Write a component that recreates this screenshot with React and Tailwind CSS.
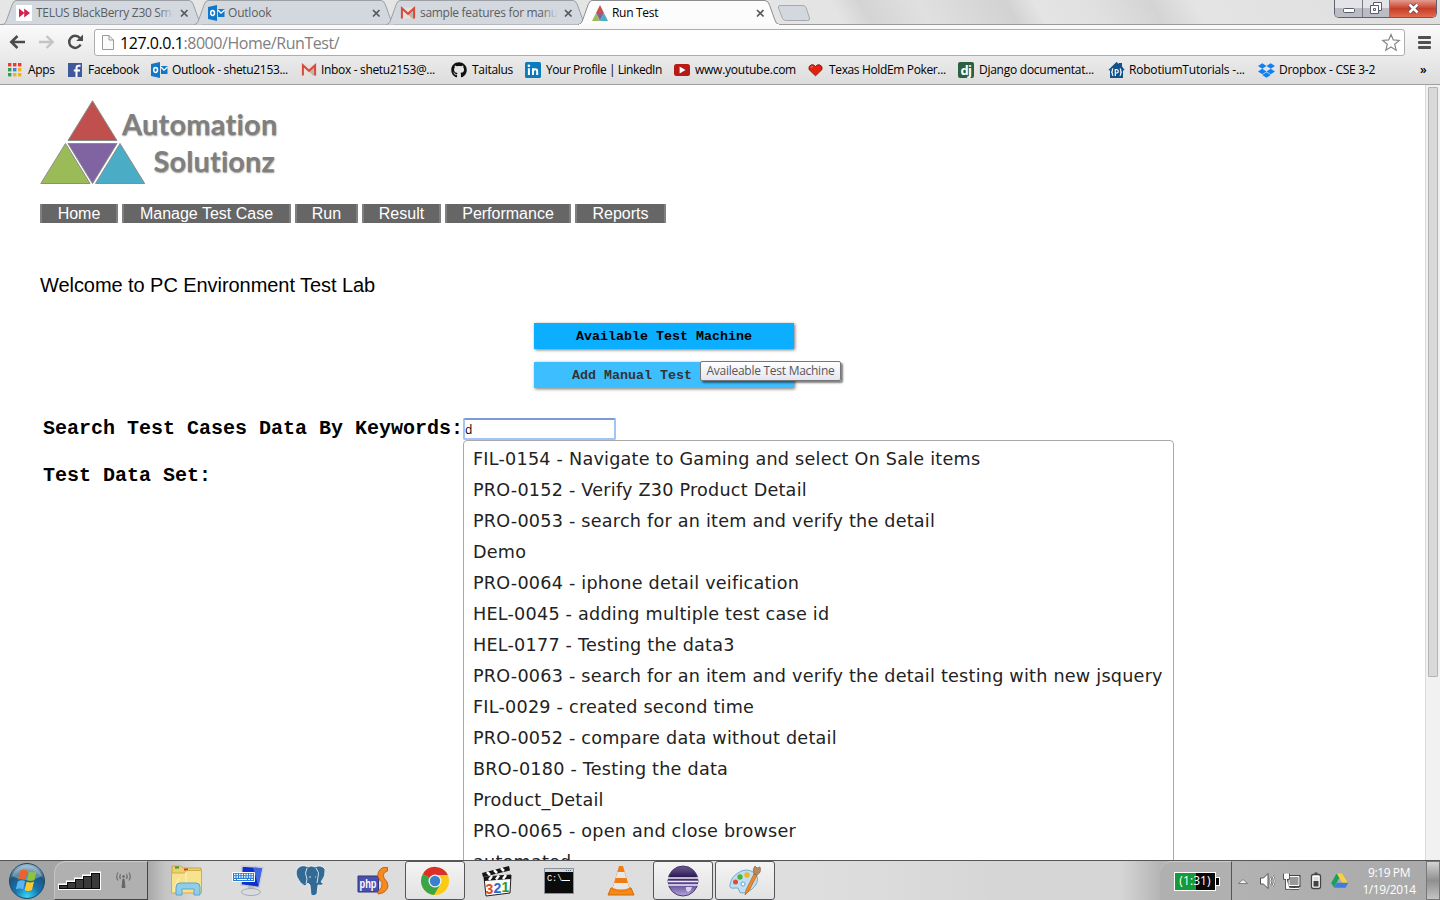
import React from "react";
import { FaGithub, FaDropbox } from "react-icons/fa";

const UI = "font-['Open_Sans','Noto_Sans',sans-serif]";

/* ---------- small icons ---------- */
const Outlook = () => (
  <svg width="17" height="16" viewBox="0 0 17 16" className="shrink-0">
    <path d="M0 2 9 0v16L0 14z" fill="#1277c9" />
    <path d="M10 4h6.5v8H10z" fill="#1277c9" />
    <path d="M10 5l3 3.2L16.5 5" stroke="#fff" strokeWidth="1.3" fill="none" />
    <ellipse cx="4.6" cy="8" rx="1.9" ry="2.4" fill="none" stroke="#fff" strokeWidth="1.5" />
  </svg>
);
const Gmail = () => (
  <svg width="16" height="16" viewBox="0 0 16 16" className="shrink-0">
    <path d="M1 2.5h14v11H1z" fill="#e6e1da" />
    <path d="M15 13.5V4L8 9.5l4 4z" fill="#bdb6ae" />
    <path d="M1.9 13.5V3.2L8 8.8l6.1-5.6v10.3" stroke="#d9493c" strokeWidth="2" fill="none" />
  </svg>
);
const Telus = () => (
  <svg width="16" height="16" viewBox="0 0 16 16" className="shrink-0">
    <path d="M0 0h16v16H0z" fill="#fff" />
    <path d="M3 3.5 8.5 8 3 12.5zM8.2 3.5 14 8l-5.800 4.500z" fill="#d3214f" />
  </svg>
);
const Pyramid = () => (
  <svg width="16" height="16" viewBox="0 0 16 16" className="shrink-0">
    <path d="M8 0l4 8H4z" fill="#c8504d" />
    <path d="M4 8h8l-4 8z" fill="#8064a2" />
    <path d="M4 8l4 8H0z" fill="#9bbb59" />
    <path d="M12 8l4 8H8z" fill="#4bacc6" />
  </svg>
);
const AppsIcon = () => (
  <svg width="14" height="14" viewBox="0 0 14 14" className="shrink-0">
    {["#ee3b31", "#ee3b31", "#ee3b31", "#2f9e55", "#3b82f0", "#f2b21b", "#2f9e55", "#f2b21b", "#f2b21b"].map((c, i) => (
      <rect key={i} x={(i % 3) * 5} y={Math.floor(i / 3) * 5} width="3.4" height="3.4" fill={c} />
    ))}
  </svg>
);
const Facebook = () => (
  <svg width="14" height="14" viewBox="0 0 14 14" className="shrink-0">
    <path d="M0 0h14v14H0z" fill="#3f5a9b" />
    <path d="M8.500 14V5q0-2.300 2.300-2.300h1.700M5.800 7.600h6.200" stroke="#fff" strokeWidth="2" fill="none" />
  </svg>
);
const LinkedIn = () => (
  <svg width="16" height="16" viewBox="0 0 16 16" className="shrink-0">
    <rect width="16" height="16" rx="1.500" fill="#0a7bbd" />
    <path d="M3.900 6.300V13M8 13V6.300M8 9.500q0-2.300 2.200-2.300 2 0 2 2.300V13" stroke="#fff" strokeWidth="2" fill="none" />
    <circle cx="3.900" cy="3.800" r="1.300" fill="#fff" />
  </svg>
);
const YouTube = () => (
  <svg width="16" height="12" viewBox="0 0 16 12" className="shrink-0">
    <rect width="16" height="12" rx="2.5" fill="#b81a16" />
    <path d="M5.6 2.6 11.5 6 5.6 9.4z" fill="#fff" />
  </svg>
);
const Heart = () => (
  <svg width="15" height="14" viewBox="0 0 15 14" className="shrink-0">
    <path d="M7.5 12.8 1 6.5Q.2 3 3.4 1.8 6 1.2 7.5 3.6 9 1.2 11.6 1.8 14.8 3 14 6.5z" fill="#e6200f" stroke="#7e1408" strokeWidth=".9" />
    <path d="M3 4.6q.5-1.2 1.7-1" stroke="#ff9c80" strokeWidth="1" fill="none" />
  </svg>
);
const Django = () => (
  <span className="flex h-4 w-4 shrink-0 items-center justify-center rounded-[2px] bg-[#2b6141] font-['Open_Sans',sans-serif] text-[13px] leading-[14px] font-bold tracking-[-0.5px] text-white">dj</span>
);
const Robotium = () => (
  <svg width="17" height="16" viewBox="0 0 17 16" className="shrink-0">
    <path d="M8.500 0 11 2V1h3v3.500L16.700 8 15 8.600V16H2V8.600L.3 8z" fill="#12518a" />
    <path d="M5.200 6.500Q4 6.800 4.300 9q0 1-1 1.200 1 .2 1 1.200-.2 2 1 2.300M11.800 6.500q1.200.3.9 2.500 0 1 1 1.200-1 .2-1 1.200.2 2-1 2.300M7.300 14V7.600h1.400q1.600.1 1.600 1.700t-1.600 1.700H7.500" stroke="#fff" strokeWidth="1.2" fill="none" />
  </svg>
);

/* ---------- browser chrome ---------- */
const TabShape = ({ active }) => (
  <svg width="205" height="25" viewBox="0 0 205 25" className="absolute top-0 left-0 -z-10">
    <path
      d="M0 24.500C3 24.500 4 22 5 19L10 5Q11.500 .5 14 .5H187Q190 .5 191.500 5L196.500 19Q198 24.500 201 24.500"
      fill={active ? "#fcfcfc" : "#d3d8df"}
      stroke={active ? "#8e8e8e" : "#9c9fa4"}
    />
    {active && <path d="M1 24.500h200" stroke="#fafafa" />}
  </svg>
);
const TABS = [
  { icon: <Telus />, title: "TELUS BlackBerry Z30 Sma", track: "tracking-[-0.3px]" },
  { icon: <Outlook />, title: "Outlook", track: "tracking-[-0.2px]" },
  { icon: <Gmail />, title: "sample features for manua", track: "tracking-[-0.3px]" },
  { icon: <Pyramid />, title: "Run Test", active: true, track: "tracking-[-0.3px]" },
];
const Tab = ({ icon, title, active, track }) => (
  <div className={`relative isolate flex h-[25px] w-[192px] shrink-0 items-center pl-[14px] ${active ? "z-10" : ""}`}>
    <TabShape active={active} />
    <div className="flex w-5 shrink-0 pt-[1px]">{icon}</div>
    <div className={`relative w-[138px] overflow-hidden text-[12px] leading-4 whitespace-nowrap ${track} ${active ? "text-black" : "text-[#5b5d61]"}`}>
      {title}
      {!active && <span className="absolute top-0 right-0 h-4 w-4 bg-gradient-to-r from-transparent to-[#d3d8df]" />}
    </div>
    <svg width="9" height="9" viewBox="0 0 9 9" className="mt-[1px] ml-[6px] shrink-0">
      <path d="M1 1l6.500 6.500M7.500 1 1 7.500" stroke="#55575a" strokeWidth="1.700" />
    </svg>
  </div>
);

const BOOKMARKS = [
  { w: "w-[60px]", g: "w-5", icon: <AppsIcon />, label: "Apps", t: "tracking-[-0.3px]" },
  { w: "w-[83px]", g: "w-5", icon: <Facebook />, label: "Facebook", t: "tracking-[-0.3px]" },
  { w: "w-[150px]", g: "w-[21px]", icon: <Outlook />, label: "Outlook - shetu2153...", t: "tracking-[-0.33px]" },
  { w: "w-[150px]", g: "w-5", icon: <Gmail />, label: "Inbox - shetu2153@...", t: "tracking-[-0.33px]" },
  { w: "w-[74px]", g: "w-[21px]", icon: <FaGithub size={16} color="#111" />, label: "Taitalus", t: "tracking-[-0.3px]" },
  { w: "w-[149px]", g: "w-[21px]", icon: <LinkedIn />, label: "Your Profile | LinkedIn", t: "tracking-[-0.44px]" },
  { w: "w-[134px]", g: "w-[21px]", icon: <YouTube />, label: "www.youtube.com", t: "tracking-[-0.24px]" },
  { w: "w-[150px]", g: "w-[21px]", icon: <Heart />, label: "Texas HoldEm Poker...", t: "tracking-[-0.36px]" },
  { w: "w-[150px]", g: "w-[21px]", icon: <Django />, label: "Django documentat...", t: "tracking-[-0.26px]" },
  { w: "w-[150px]", g: "w-[21px]", icon: <Robotium />, label: "RobotiumTutorials -...", t: "tracking-[-0.2px]" },
  { w: "w-[162px]", g: "w-[21px]", icon: <FaDropbox size={17} color="#1081ee" />, label: "Dropbox - CSE 3-2", t: "tracking-[-0.27px]" },
];

const WindowButtons = () => (
  <div className="mr-[3px] flex h-[18px] w-[103px] overflow-hidden rounded-b-[5px] border border-t-0 border-[#5d616c]">
    <div className="flex w-[28px] items-center justify-center border-r border-[#777b86] bg-gradient-to-b from-[#e4e4e8] from-45% to-[#bcbcc4] to-50%">
      <svg width="12" height="5" className="mt-[3px]"><rect x=".5" y=".5" width="11" height="4" rx="1" fill="#fff" stroke="#5b5c6c" /></svg>
    </div>
    <div className="flex w-[27px] items-center justify-center border-r border-[#777b86] bg-gradient-to-b from-[#e4e4e8] from-45% to-[#bcbcc4] to-50%">
      <svg width="12" height="12" fill="#fff" stroke="#5b5c6c" className="-mt-[2px]"><path d="M3.500 .5h8v8h-8z" /><path d="M.5 3.500h8v8h-8z" /><path d="M3.500 6.500h2v2h-2z" /></svg>
    </div>
    <div className="flex flex-1 items-center justify-center bg-gradient-to-b from-[#e39a8e] from-0% via-[#c63e28] via-50% to-[#e2694e]">
      <svg width="13" height="11" viewBox="0 0 13 11" className="mb-[1px]">
        <path d="M2.500 1.500l8 8M10.500 1.500l-8 8" stroke="#5b4050" strokeWidth="4.200" />
        <path d="M2.500 1.500l8 8M10.500 1.500l-8 8" stroke="#fff" strokeWidth="2.600" />
      </svg>
    </div>
  </div>
);

const Chrome = () => (
  <header className={`h-[85px] shrink-0 ${UI}`}>
    <div className="flex h-[25px] justify-between border-b border-[#9a9a9a] bg-[linear-gradient(60deg,#e6e6e6_0%,#e4e4e4_58%,#d4d4d4_60%,#e0e0e0_64%,#d2d2d2_70%,#e4e4e4_72%,#e0e0e0_76%,#d4d4d4_80%,#e4e4e4_83%,#dedede_100%)]">
      <div className="flex h-[25px] pl-[2px]">
        {TABS.map((t) => <Tab key={t.title} {...t} />)}
        <svg width="34" height="16" viewBox="0 0 34 16" className="mt-[5px] ml-[7px]">
          <path d="M3 .5h23q2 0 3 2l3.500 10.500q.5 2.500-2 2.500H8.500q-2 0-3-2L1.500 3Q1 .5 3 .5z" fill="#d3d8df" stroke="#a6a8ac" />
        </svg>
      </div>
      <WindowButtons />
    </div>
    <div className="flex h-[60px] flex-col border-b border-[#a0a0a0] bg-gradient-to-b from-[#fafafa] to-[#dddddd]">
      <div className="flex h-[31px] items-end pl-[9px]">
        <svg width="76" height="18" viewBox="0 0 76 18" fill="none" className="mr-[9px] mb-[5px]">
          <path d="M16 9H3M8.500 3 2.300 9l6.200 6" stroke="#4c4c4c" strokeWidth="2.600" />
          <path d="M30 9h13M37.500 3l6.200 6-6.200 6" stroke="#c4c4c4" strokeWidth="2.400" />
          <path d="M71.600 11.500A6 6 0 1 1 70.800 5" stroke="#4c4c4c" strokeWidth="2.500" />
          <path d="M74 1.500V8h-6.800z" fill="#4c4c4c" />
        </svg>
        <div className="flex h-[27px] w-[1311px] items-center rounded-[3px] border border-[#adadad] bg-white pl-[7px]">
          <svg width="12" height="15" viewBox="0 0 12 15" className="mr-[6px]">
            <path d="M.5 .5H7l4.500 4.500v9.500H.5z" fill="#fafafa" stroke="#999" />
            <path d="M7 .5V5h4.500" fill="none" stroke="#999" />
          </svg>
          <div className="flex-1 text-[16px] leading-5 tracking-[-0.45px] text-[#808080]"><span className="text-black">127.0.0.1</span>:8000/Home/RunTest/</div>
          <svg width="20" height="19" viewBox="0 0 20 19" className="mr-[3px]">
            <path d="M10 1.500l2.300 5.400 6 .5-4.600 3.900 1.500 5.900L10 14l-5.200 3.200 1.500-5.900L1.700 7.400l6-.5z" fill="#fff" stroke="#868686" strokeWidth="1.200" />
          </svg>
        </div>
        <svg width="13" height="13" className="mb-[7px] ml-[13px]" fill="#505050">
          <rect width="13" height="3" rx="1" /><rect y="5" width="13" height="3" rx="1" /><rect y="10" width="13" height="3" rx="1" />
        </svg>
      </div>
      <div className="flex h-[28px] items-center pl-2 text-[12px] text-black">
        {BOOKMARKS.map((b) => (
          <div key={b.label} className={`flex shrink-0 items-center whitespace-nowrap ${b.w}`}>
            <span className={`flex shrink-0 ${b.g}`}>{b.icon}</span>
            <span className={b.t}>{b.label}</span>
          </div>
        ))}
        <span className="text-[12px] font-semibold">»</span>
      </div>
    </div>
  </header>
);

/* ---------- page ---------- */
const Logo = () => (
  <div className="flex h-[86px]">
    <svg width="106" height="86" viewBox="0 0 106 86" stroke="#8c8c8c" strokeWidth="1">
      <path d="M52.500 .8 77 40.500H28z" fill="#c0504d" />
      <path d="M28 43.500h49L52.500 83.500z" fill="#8064a2" />
      <path d="M25.500 43.500 50 83.500H.8z" fill="#9bbb59" />
      <path d="M80 43.500 104.700 83.500H55.500z" fill="#4bacc6" />
    </svg>
    <div className="-ml-[24px] w-[153px] pt-[5px] text-right font-['Lato',sans-serif] text-[29px] leading-[37px] font-bold text-[#7f7f7f] [text-shadow:0.5px_0.500px_1.5px_#999]">
      <div className="whitespace-nowrap tracking-[0.2px]">Automation</div>
      <div className="whitespace-nowrap tracking-[0.1px]">Solutionz</div>
    </div>
  </div>
);
const NAV = [
  ["Home", "w-[78px]"],
  ["Manage Test Case", "w-[169px]"],
  ["Run", "w-[63px]"],
  ["Result", "w-[79px]"],
  ["Performance", "w-[126px]"],
  ["Reports", "w-[91px]"],
];
const RESULTS = [
  "FIL-0154 - Navigate to Gaming and select On Sale items",
  "PRO-0152 - Verify Z30 Product Detail",
  "PRO-0053 - search for an item and verify the detail",
  "Demo",
  "PRO-0064 - iphone detail veification",
  "HEL-0045 - adding multiple test case id",
  "HEL-0177 - Testing the data3",
  "PRO-0063 - search for an item and verify the detail testing with new jsquery",
  "FIL-0029 - created second time",
  "PRO-0052 - compare data without detail",
  "BRO-0180 - Testing the data",
  "Product_Detail",
  "PRO-0065 - open and close browser",
  "automated",
];

const Page = () => (
  <main className="flex h-[775px] shrink-0 overflow-hidden bg-white">
    <div className="flex-1 pt-[15px] pl-10 font-['Liberation_Sans',sans-serif] text-black">
      <Logo />
      <nav className="mt-[18px] flex h-[19px] gap-1">
        {NAV.map(([label, w]) => (
          <a key={label} className={`border-x-2 border-[#808080] bg-[#666] text-center text-[16px] leading-[19px] whitespace-nowrap text-white ${w}`}>{label}</a>
        ))}
      </nav>
      <h1 className="mt-[50px] h-6 text-[20px] leading-6 tracking-[-0.06px]">Welcome to PC Environment Test Lab</h1>
      <div className="mt-[26px] ml-[494px] flex w-[260px] flex-col gap-[13px] text-center font-['Liberation_Mono',monospace] text-[13.33px] font-bold">
        <button className="h-[26px] bg-[#0caeff] pt-[1px] leading-[26px] shadow-[1px_1px_3px_#777]">Available Test Machine</button>
        <div className="relative">
          <button className="block h-[26px] w-full bg-[#0caeff] pt-[1px] leading-[26px] opacity-80 shadow-[1px_1px_3px_#555]">Add Manual Test Machine</button>
          <div className={`absolute top-[-1px] left-[166px] h-5 w-[141px] rounded-[2px] border border-[#767676] bg-gradient-to-b from-white to-[#e4e5f0] text-center text-[12px] leading-[18px] font-normal tracking-[-0.27px] whitespace-nowrap text-[#575757] shadow-[2px_2px_2px_rgba(0,0,0,0.5)] ${UI}`}>Availeable Test Machine</div>
        </div>
      </div>
      <div className="mt-[30px] ml-[3px] flex font-['Liberation_Mono',monospace] text-[20px] font-bold">
        <div className="w-[420px] whitespace-nowrap">
          <div className="h-[22px] leading-[22px]">Search Test Cases Data By Keywords:</div>
          <div className="mt-[25px] leading-[22px]">Test Data Set:</div>
        </div>
        <div className="relative">
          <div className={`h-[22px] w-[153px] rounded-[2px] border-2 border-[#a3c3fb] border-t-[#7c9bd6] bg-white text-[12px] leading-[19px] font-normal ${UI}`}>d</div>
          <ul className="absolute top-[22px] left-0 h-[460px] w-[711px] rounded-[4px] border border-[#aaa] bg-white pt-[3px] pl-[9px] font-['DejaVu_Sans',sans-serif] text-[17.6px] font-normal tracking-[0.23px] text-[#222]">
            {RESULTS.map((r) => <li key={r} className="h-[31px] leading-[31px] whitespace-nowrap">{r}</li>)}
          </ul>
        </div>
      </div>
    </div>
    <div className="w-[15px] border-l border-[#dcdcdc] bg-[#f1f1f1] pt-[2px] pl-[2px]">
      <div className="h-[590px] w-[10px] rounded-[1px] border border-[#b4b4b4] bg-[#d9d9d9]" />
    </div>
  </main>
);

/* ---------- taskbar ---------- */
const StartOrb = () => (
  <svg width="38" height="38" viewBox="0 0 38 38">
    <defs>
      <radialGradient id="orb" cx=".5" cy=".95" r=".9"><stop offset="0" stopColor="#35d6f8" /><stop offset=".4" stopColor="#1674ae" /><stop offset=".75" stopColor="#1d5580" /><stop offset="1" stopColor="#8db0c6" /></radialGradient>
    </defs>
    <circle cx="19" cy="19" r="17.500" fill="url(#orb)" stroke="#1f4964" />
    <path d="M4 14a16 16 0 0 1 30 0q-15 8-30 0z" fill="#fff" opacity=".3" />
    <path d="M12 9q3.500-2.300 7.300-.3L17.400 17.600q-3.800-1.700-7.300.3z" fill="#f0602a" />
    <path d="M20.800 9.300q3.800 1.800 7.700-.2L26.500 18q-3.600 1.900-7.500.2z" fill="#8cc33f" />
    <path d="M9.700 19.400q3.700-2 7.400-.4l-1.900 8.300q-3.600-1.700-7.400.3z" fill="#5ab4f0" />
    <path d="M18.600 19.700q3.800 1.700 7.400-.2l-2 8.500q-3.600 1.900-7.400.2z" fill="#fdc82f" />
  </svg>
);
const Explorer = () => (
  <svg width="34" height="34" viewBox="0 0 34 34">
    <path d="M2 5V2h9l2 2h18v24H2z" fill="#edcf72" stroke="#c9a543" />
    <path d="M5 2.500h4v2H5z" fill="#23a52e" /><path d="M14 4.500h4v2h-4z" fill="#d33d20" /><path d="M22 6h5v2h-5z" fill="#2e95d8" />
    <path d="M1.500 9h13l2-2.500h15V29h-30z" fill="#f7e28e" stroke="#cfae4f" />
    <path d="M3 28 9 14M16 8v10" stroke="#fff" opacity=".6" />
    <path d="M6 31V23q0-4 4-4h16q4 0 4 4v8h-6v-6H12v6z" fill="#8fcdea" stroke="#5da4cb" />
  </svg>
);
const Keyboard = () => (
  <svg width="34" height="34" viewBox="0 0 34 34">
    <path d="M10 2 31 3.500l-4 20L9 21z" fill="#1030c8" stroke="#c9ccd4" strokeWidth="1.500" />
    <path d="M21 3.500l9 .8-3.500 18z" fill="#5f8df0" opacity=".6" />
    <path d="M16 22h6l1 5h-8z" fill="#b8bcc2" /><ellipse cx="19" cy="28" rx="9.500" ry="3.500" fill="#d9dbdf" stroke="#a6a9ae" />
    <path d="M.5 8.500h22v9H.5z" fill="#2a7ed4" stroke="#fff" />
    <path d="M2 10.500h19M2 13h19" stroke="#fff" strokeWidth="1.400" strokeDasharray="1.500 1" /><path d="M2 15.500h19" stroke="#fff" strokeDasharray="2 1 10 1" />
  </svg>
);
const Elephant = () => (
  <svg width="32" height="32" viewBox="0 0 32 32">
    <path d="M3 3Q7-1 13 2q3-2 7 0 6-3 10 2 1 7-4 13l3 2q-3 2-6 1l-1 9q-3 3-6 1l-1-10-2-2-3 3Q5 19 2 12 0 6 3 3z" fill="#336a94" stroke="#fff" strokeWidth=".7" />
    <path d="M12 3q-3 5 0 11l-1 5M21 3q4 5 2 9l-1 6M14 12h2M20 12h1" stroke="#d3e1ec" strokeWidth="1" fill="none" />
  </svg>
);
const PhpStorm = () => (
  <svg width="32" height="30" viewBox="0 0 32 30">
    <path d="M1 10h20.500v16H1z" fill="#4b50ae" stroke="#30357d" />
    <path d="M30.500 1.500H26q-6 3-5 9 1 4 4 6 1 5-4 9v2.500q9-1 10-8 0-4-4-8-2-5 3.500-7z" fill="#f58a1f" stroke="#b9540c" strokeWidth=".8" />
    <text x="2.500" y="21.500" fill="#fff" fontFamily="Liberation Sans" fontWeight="700" fontSize="12" textLength="17" lengthAdjust="spacingAndGlyphs">php</text>
  </svg>
);
const ChromeIcon = () => (
  <svg width="30" height="30" viewBox="0 0 30 30">
    <circle cx="15" cy="15" r="14" fill="#fbcb14" />
    <path d="M15 15 2.900 8A14 14 0 0 1 27.800 9H15z" fill="#dc2f25" />
    <path d="M15 15 2.900 8A14 14 0 0 0 14 29l6.500-11z" fill="#3aa547" />
    <circle cx="15" cy="15" r="6.500" fill="#f4f4f4" /><circle cx="15" cy="15" r="5.200" fill="#3b80d0" />
  </svg>
);
const Clapper = () => (
  <svg width="32" height="32" viewBox="0 0 32 32">
    <path d="M1 8 28 1l1 4.500L2 12z" fill="#151515" /><path d="M6 7l3 3M13 5l3 3M20 3l3 3" stroke="#fff" strokeWidth="2.500" />
    <path d="M3 12l27-2-1 18-24 3z" fill="#fafafa" stroke="#222" /><path d="M3 12l27-2v4L3 16z" fill="#151515" />
    <path d="M8 15l3-4M15 14.500l3-4M22 14l3-4" stroke="#fff" strokeWidth="2.500" />
    <g fontFamily="Liberation Sans" fontWeight="700" fontSize="14"><text x="4.500" y="28.500" fill="#e0491c">3</text><text x="12.500" y="27.500" fill="#2a6cd0">2</text><text x="20.500" y="26.500" fill="#2f9a2f">1</text></g>
  </svg>
);
const Terminal = () => (
  <svg width="30" height="26" viewBox="0 0 30 26">
    <path d="M.5 .5h29v25H.5z" fill="#0b0b0b" stroke="#8d9299" /><path d="M1 1h28v3H1z" fill="#cfd6df" /><path d="M22 2.500h6" stroke="#5a6a80" strokeDasharray="1 1" />
    <text x="3" y="13" fill="#fff" fontFamily="Liberation Mono" fontSize="8.500">C:\</text><path d="M18 12.500h8" stroke="#fff" />
  </svg>
);
const Cone = () => (
  <svg width="28" height="32" viewBox="0 0 28 32">
    <path d="M4 23h20l3 7H1z" fill="#f58a17" stroke="#d06a08" /><path d="M12 1h4l7 24q-9 4-18 0z" fill="#f17c12" />
    <path d="M10.500 7h7l1.700 6H8.700zM7.200 18h13.600l1.400 5q-8 3-16.400 0z" fill="#e8e8e8" />
  </svg>
);
const Eclipse = () => (
  <svg width="32" height="32" viewBox="0 0 32 32">
    <defs><linearGradient id="ecl" x2="0" y2="1"><stop offset="0" stopColor="#6d5a94" /><stop offset=".35" stopColor="#2f1e55" /><stop offset=".6" stopColor="#5c4a94" /><stop offset="1" stopColor="#b5a5dc" /></linearGradient></defs>
    <circle cx="16" cy="16" r="15" fill="url(#ecl)" stroke="#4a3a6c" />
    <path d="M1 13h30M1 16.500h30M1 20h30" stroke="#efeaf8" strokeWidth="1.500" /><path d="M19 22a5 5 0 0 0 2 5q3-1 4-5z" fill="#fff" opacity=".7" />
  </svg>
);
const Paint = () => (
  <svg width="34" height="32" viewBox="0 0 34 32">
    <path d="M10 8q8-6 17 0 5 6 0 13-6 7-13 7-3 0-3-3t-4-2q-6 1-5-3 1-8 8-12z" fill="#bfdff2" stroke="#74a9cb" />
    <circle cx="7.500" cy="17" r="2.500" fill="#e24a35" /><circle cx="12" cy="12" r="2.700" fill="#4cb43c" /><circle cx="19" cy="10" r="2.700" fill="#f3b51e" /><circle cx="15" cy="19" r="2" fill="#fff" stroke="#6aa1c9" />
    <path d="M17 30l1-5 8-16 3 1-8 16z" fill="#ee8a2c" stroke="#b8601a" strokeWidth=".7" /><path d="M26 9q-2-5 1-8l2 2 3-1q2 5-3 8z" fill="#b58c5e" stroke="#7f5d39" strokeWidth=".6" />
  </svg>
);
const APPS = [
  { icon: <Explorer /> }, { icon: <Keyboard /> }, { icon: <Elephant /> }, { icon: <PhpStorm /> },
  { icon: <ChromeIcon />, open: true }, { icon: <Clapper /> }, { icon: <Terminal /> }, { icon: <Cone /> },
  { icon: <Eclipse />, open: true }, { icon: <Paint />, open: true },
];

const Taskbar = () => (
  <footer className={`flex h-10 shrink-0 border-t border-[#55565a] bg-[linear-gradient(90deg,#a3a3a3_0px,#a8a8a8_148px,#c4c4c4_165px,#dcdcdc_200px,#dedede_800px,#dcdcdc_870px,#d6d6d6_1000px,#d6d6d6_1120px,#b5b5b5_1160px,#a9a9a9_1440px)] ${UI}`}>
    <div className="flex w-[54px] items-center pl-2"><StartOrb /></div>
    <div className="flex w-[94px] rounded-tl-[12px] border-t border-r border-b border-l border-[#444] border-t-[#ccc] border-l-[#c4c4c4] bg-[#b0b0b0]">
      <svg width="92" height="36" viewBox="0 0 92 36">
        <path d="M3 28V21.500h8v-3h8v-3h8v-3h8v-3h11V28z" fill="#fff" />
        {[0, 1, 2, 3, 4].map((n) => (
          <rect key={n} x={4.500 + n * 8} y={23.500 - n * 3} width="8" height={3 + n * 3} fill="#3a3a3a" stroke="#0c0c0c" />
        ))}
        <path d="M67 25.500l1-8.500h1l1 8.500z" fill="#666" stroke="#666" /><circle cx="68.500" cy="14.500" r="1.300" fill="#666" />
        <path d="M65.500 12q-1.500 2.500 0 5M71.500 12q1.500 2.500 0 5M63 10.500q-2.500 4 0 8M74 10.500q2.500 4 0 8" stroke="#707070" strokeWidth="1.200" fill="none" />
      </svg>
    </div>
    <div className="flex flex-1 gap-[2px] pl-[9px]">
      {APPS.map((a, i) => (
        <div key={i} className={`flex h-[39px] w-[60px] shrink-0 items-center justify-center rounded-[3px] border ${a.open ? "border-[#55565a] bg-gradient-to-b from-[#f4f4f4] to-[#e2e2e2]" : "border-transparent"}`}>{a.icon}</div>
      ))}
    </div>
    <div className="flex w-[72px] items-center rounded-tl-[12px] border-t border-r border-t-[#ccc] border-r-[#555] bg-[#b0b0b0] pl-[14px]">
      <div className="h-[19px] w-[42px] border border-white bg-[linear-gradient(90deg,#129a3b_52%,#0a0a0a_52%)] text-center text-[12px] leading-[16px] tracking-[0.1px] text-white">(1:31)</div>
      <div className="h-[9px] w-[4px] border border-l-0 border-white bg-black" />
    </div>
    <div className="flex w-[194px] items-center">
      <svg width="122" height="36" viewBox="0 0 122 36">
        <path d="M6.500 20.500l4.500-4 4.500 4z" fill="#f4f4f4" stroke="#6b6b6b" strokeWidth=".8" />
        <g stroke="#515151" fill="#fff"><path d="M28.500 15v6h3l4.500 4.500v-15l-4.500 4.500z" /></g>
        <path d="M38 14.500q2 3.500 0 7M40.500 12.500q3.500 5.500 0 11" fill="none" stroke="#666" strokeWidth="2.200" /><path d="M38 14.500q2 3.500 0 7M40.500 12.500q3.500 5.500 0 11" fill="none" stroke="#fff" strokeWidth="1" />
        <path d="M57 13.500h10v9H57z" stroke="#444" strokeWidth="3" fill="none" /><path d="M57 13.500h10v9H57z" stroke="#fff" strokeWidth="1" fill="#999" />
        <path d="M58 25.500h9M62 23v2" stroke="#444" strokeWidth="2.500" fill="none" /><path d="M58 25.500h9" stroke="#fff" />
        <path d="M54.500 16v9.500h3M52.500 10.500v5h4v-5" stroke="#444" strokeWidth="2.600" fill="none" /><path d="M54.500 16v9.500h3M52.500 10.500v5h4v-5" stroke="#fff" strokeWidth="1" fill="#fff" />
        <rect x="79.500" y="11.500" width="9" height="14" rx="2" fill="#fff" stroke="#444" strokeWidth="1.300" /><path d="M81.500 14h5v9.500h-5z" fill="#ddd" /><path d="M81.500 18h5v5.500h-5z" fill="#444" /><path d="M82.500 9.500h3v2h-3z" fill="#444" />
        <path d="M105 10.500h5l6 9.500h-5.500z" fill="#fbd13f" /><path d="M104.500 10.500l2.800 4.500-5.300 9.500-2.800-4.500z" fill="#1b9f5c" /><path d="M104.800 19.800h11.500l-2.800 5h-11.500z" fill="#3c7de0" />
      </svg>
      <div className="w-[70px] text-center text-[12px] leading-[17px] tracking-[-0.4px] whitespace-nowrap text-white">
        <div>9:19 PM</div>
        <div>1/19/2014</div>
      </div>
    </div>
    <div className="w-[14px] border border-[#777] bg-gradient-to-b from-[#d4d4d4] via-[#8f8f8f] via-50% to-[#c4c4c4]" />
  </footer>
);

export default function App() {
  return (
    <div className="flex h-[900px] w-[1440px] flex-col overflow-hidden">
      <Chrome />
      <Page />
      <Taskbar />
    </div>
  );
}
